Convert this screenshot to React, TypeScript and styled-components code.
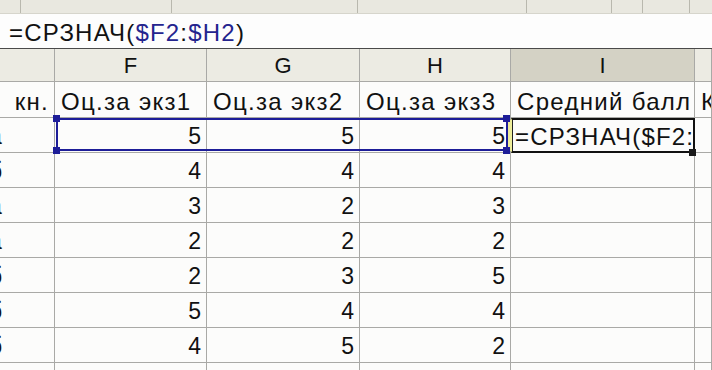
import * as React from "react";
import styled, { createGlobalStyle } from "styled-components";

const Global = createGlobalStyle`
  html, body {
    margin: 0;
    padding: 0;
    background: #fbfbfa;
    overflow: hidden;
  }
  body {
    font-family: "Liberation Sans", Arial, sans-serif;
    color: #111;
  }
`;

const Page = styled.div`
  width: 712px;
  height: 370px;
  overflow: hidden;
  display: flex;
  flex-direction: column;
`;

const Toolbar = styled.div`
  height: 13px;
  background: #e9e8e0;
  border-bottom: 1px solid #d6d5cc;
  display: flex;
  flex: none;
`;

const ToolSlot = styled.div<{ $w: number }>`
  width: ${(p) => p.$w}px;
  flex: none;
  border-right: 1px solid #b9b8ae;
`;

const FormulaBar = styled.div`
  height: 35px;
  flex: none;
  background: #fdfdfd;
  border-bottom: 1px solid #4a4a4a;
  display: flex;
  align-items: center;
  padding-left: 9px;
  padding-top: 3px;
  box-sizing: border-box;
  font-size: 24px;
  letter-spacing: 1.2px;
  white-space: nowrap;
`;

const Ref = styled.span`
  color: #24248e;
`;

const Sheet = styled.div`
  position: relative;
  flex: 1;
  display: grid;
  grid-template-columns: 55px 152px 153px 151px 184px 1fr;
  grid-template-rows: 33px 36px repeat(8, 35px);
`;

const Cell = styled.div`
  border-right: 1px solid #a9a9a6;
  border-bottom: 1px solid #a9a9a6;
  background: #fcfcfb;
  display: flex;
  align-items: center;
  overflow: hidden;
  white-space: nowrap;
  box-sizing: border-box;
`;

const HeadCell = styled(Cell)<{ $active?: boolean }>`
  background: ${(p) => (p.$active ? "#d4d2c5" : "#ecebe3")};
  justify-content: center;
  font-size: 22px;
  padding-top: 2px;
`;

const LabelCell = styled(Cell)<{ $right?: boolean }>`
  font-size: 24px;
  letter-spacing: 1.3px;
  justify-content: ${(p) => (p.$right ? "flex-end" : "flex-start")};
  padding: 4px ${(p) => (p.$right ? "5px" : "0")} 0 ${(p) => (p.$right ? "0" : "6px")};
`;

const NumCell = styled(Cell)`
  justify-content: flex-end;
  padding: 3px 5px 0 0;
  font-size: 23px;
`;

const EdgeCell = styled(Cell)`
  font-size: 23px;
  padding-top: 3px;
`;

const Cut = styled.span`
  margin-left: -11px;
`;

const ActiveCell = styled(Cell)`
  font-size: 24px;
  letter-spacing: 1.2px;
  padding: 2px 0 0 3px;
  border-top: 2px solid #111;
  border-right: 2px solid #111;
  border-bottom: 2px solid #111;
  border-left: 1px solid #f0ef9c;
  box-shadow: inset 1px 0 0 #222;
`;

const Selection = styled.div`
  position: absolute;
  left: 56px;
  top: 69px;
  width: 452px;
  height: 33px;
  border: 2px solid #1d1d98;
  box-sizing: border-box;
  pointer-events: none;
`;

const Handle = styled.div<{ $x: number; $y: number; $dark?: boolean }>`
  position: absolute;
  left: ${(p) => p.$x}px;
  top: ${(p) => p.$y}px;
  width: 7px;
  height: 7px;
  background: ${(p) => (p.$dark ? "#1a1a1a" : "#1d1d98")};
`;

const YellowMark = styled.div`
  position: absolute;
  left: 508px;
  top: 71px;
  width: 3px;
  height: 31px;
  background: #ecec98;
`;

const edge = ["а", "б", "а", "а", "б", "б", "б", ""];
const data: number[][] = [
  [5, 5, 5],
  [4, 4, 4],
  [3, 2, 3],
  [2, 2, 2],
  [2, 3, 5],
  [5, 4, 4],
  [4, 5, 2],
];

export default function App() {
  return (
    <Page>
      <Global />
      <Toolbar>
        <ToolSlot $w={20} />
        <ToolSlot $w={150} />
        <ToolSlot $w={185} />
        <ToolSlot $w={168} />
        <ToolSlot $w={84} />
        <ToolSlot $w={30} />
        <ToolSlot $w={46} />
      </Toolbar>
      <FormulaBar>
        =СРЗНАЧ(<Ref>$F2</Ref>:<Ref>$H2</Ref>)
      </FormulaBar>
      <Sheet>
        <HeadCell />
        <HeadCell>F</HeadCell>
        <HeadCell>G</HeadCell>
        <HeadCell>H</HeadCell>
        <HeadCell $active>I</HeadCell>
        <HeadCell />

        <LabelCell $right>кн.</LabelCell>
        <LabelCell>Оц.за экз1</LabelCell>
        <LabelCell>Оц.за экз2</LabelCell>
        <LabelCell>Оц.за экз3</LabelCell>
        <LabelCell>Средний балл</LabelCell>
        <LabelCell>К</LabelCell>

        {edge.map((e, i) => {
          const row = data[i];
          return (
            <React.Fragment key={i}>
              <EdgeCell>
                <Cut>{e}</Cut>
              </EdgeCell>
              <NumCell>{row ? row[0] : ""}</NumCell>
              <NumCell>{row ? row[1] : ""}</NumCell>
              <NumCell>{row ? row[2] : ""}</NumCell>
              {i === 0 ? <ActiveCell>=СРЗНАЧ($F2:</ActiveCell> : <Cell />}
              <Cell />
            </React.Fragment>
          );
        })}

        <Selection />
        <YellowMark />
        <Handle $x={53} $y={66} />
        <Handle $x={53} $y={98} />
        <Handle $x={503} $y={66} />
        <Handle $x={503} $y={98} />
        <Handle $x={689} $y={100} $dark />
      </Sheet>
    </Page>
  );
}
